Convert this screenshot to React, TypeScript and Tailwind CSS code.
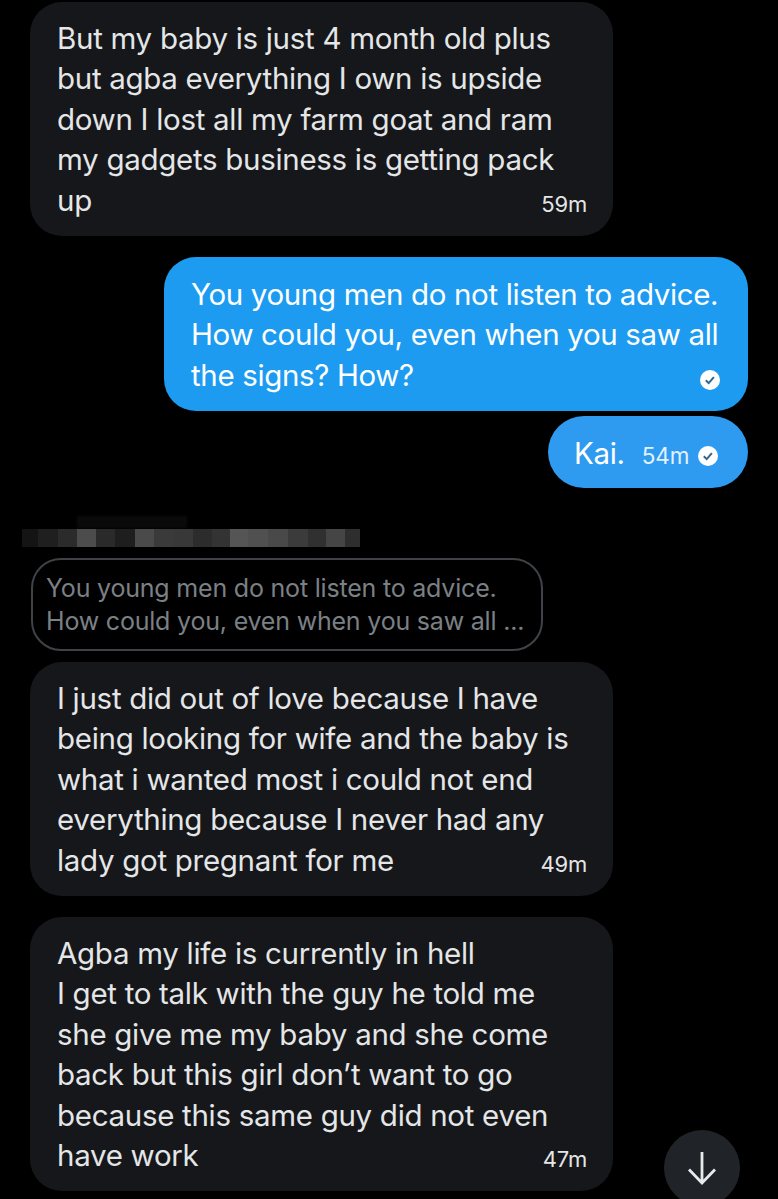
const FONT = "font-['Inter','Noto_Sans',sans-serif]";

// pixelated redaction over the sender name
const BLUR = [
  { w: 16, c: '#141414' }, { w: 20, c: '#1f1f1f' }, { w: 19, c: '#2b2b2b' }, { w: 19, c: '#4c4c4c' },
  { w: 19, c: '#2a2a2a' }, { w: 20, c: '#1e1e1e' }, { w: 19, c: '#4a4a4a' }, { w: 19, c: '#3a3a3a' },
  { w: 20, c: '#383838' }, { w: 19, c: '#2c2c2c' }, { w: 18, c: '#333333' }, { w: 18, c: '#555555' },
  { w: 20, c: '#505050' }, { w: 20, c: '#494949' }, { w: 20, c: '#3b3b3b' }, { w: 18, c: '#303030' },
  { w: 19, c: '#454545' }, { w: 15, c: '#2e2e2e' },
];

function Check() {
  return (
    <svg width="20" height="20" viewBox="0 0 20 20" className="block shrink-0">
      <circle cx="10" cy="10" r="10" fill="#ffffff" />
      <path d="M5.8 10.2l2.9 2.9 5.2-6" fill="none" stroke="#33658a" strokeWidth="2" />
    </svg>
  );
}

function Received({ lines, time }: { lines: string[]; time: string }) {
  const last = lines[lines.length - 1];
  return (
    <div className="ml-[30px] w-[583px] rounded-[32px] bg-[#16171a] pl-[27px] pr-[26px] pt-[16px] pb-[16px] text-[29.5px] leading-[40.4px] tracking-[-0.3px] text-[#e4e6e7]">
      {lines.slice(0, -1).map((l) => (
        <div key={l} className="whitespace-nowrap">{l}</div>
      ))}
      <div className="flex h-[40.4px] items-center justify-between">
        <span className="whitespace-nowrap">{last}</span>
        <span className="mt-[8px] text-[22px] leading-[26px] tracking-[-0.2px]">{time}</span>
      </div>
    </div>
  );
}

export default function App() {
  return (
    <div className={`${FONT} relative h-[1199px] w-[778px] overflow-hidden bg-black pt-[2px]`}>
      <Received
        lines={[
          'But my baby is just 4 month old plus',
          'but agba everything I own is upside',
          'down I lost all my farm goat and ram',
          'my gadgets business is getting pack',
          'up',
        ]}
        time="59m"
      />

      <div className="mt-[21px] ml-[164px] h-[154px] w-[584px] rounded-[32px] bg-[#1d9bf0] pl-[27px] pr-[27px] pt-[17px] text-[29.5px] leading-[40.4px] tracking-[-0.35px] text-white">
        <div className="whitespace-nowrap">You young men do not listen to advice.</div>
        <div className="whitespace-nowrap">How could you, even when you saw all</div>
        <div className="flex h-[40.4px] items-center justify-between">
          <span>the signs? How?</span>
          <span className="mt-[10px] mr-[1px]"><Check /></span>
        </div>
      </div>

      <div className="mt-[5px] ml-[548px] flex h-[72px] w-[200px] items-center rounded-[36px] bg-[#2e9bf0] pl-[26px] text-white">
        <span className="mt-[1px] text-[29.5px] leading-[40px] tracking-[-0.35px]">Kai.</span>
        <span className="ml-[17px] mt-[7px] text-[22.5px] text-[#e3f2fd]">54m</span>
        <span className="ml-[8px] mt-[8px]"><Check /></span>
      </div>

      {/* redacted sender name */}
      <div className="mt-[27px] ml-[22px] flex h-[32px] flex-col justify-end">
        <div className="mb-[1px] ml-[55px] h-[12px] w-[110px] bg-[#0a0a0a] blur-[1px]" />
        <div className="flex h-[18px] blur-[0.5px]">
          {BLUR.map((b, i) => (
            <div key={i} className="h-full" style={{ width: b.w, backgroundColor: b.c }} />
          ))}
        </div>
      </div>

      <div className="mt-[11px] ml-[31px] h-[93px] w-[512px] rounded-[30px] border-2 border-[#3f4347] pl-[13px] pt-[12px] text-[25px] leading-[33px] tracking-[-0.2px] text-[#7b8085]">
        <div className="whitespace-nowrap">You young men do not listen to advice.</div>
        <div className="whitespace-nowrap">How could you, even when you saw all ...</div>
      </div>

      <div className="mt-[11px]">
        <Received
          lines={[
            'I just did out of love because I have',
            'being looking for wife and the baby is',
            'what i wanted most i could not end',
            'everything because I never had any',
            'lady got pregnant for me',
          ]}
          time="49m"
        />
      </div>

      <div className="mt-[21px]">
        <Received
          lines={[
            'Agba my life is currently in hell',
            'I get to talk with the guy he told me',
            'she give me my baby and she come',
            'back but this girl don’t want to go',
            'because this same guy did not even',
            'have work',
          ]}
          time="47m"
        />
      </div>

      {/* scroll to bottom */}
      <div className="absolute left-[664px] top-[1130px] flex h-[76px] w-[76px] items-center justify-center rounded-full bg-[#202327]">
        <svg width="30" height="34" viewBox="0 0 30 34" fill="none" stroke="#e7e9ea" strokeWidth="2.8">
          <path d="M15 1v31M2 18.5L15 32 28 18.5" />
        </svg>
      </div>
    </div>
  );
}
